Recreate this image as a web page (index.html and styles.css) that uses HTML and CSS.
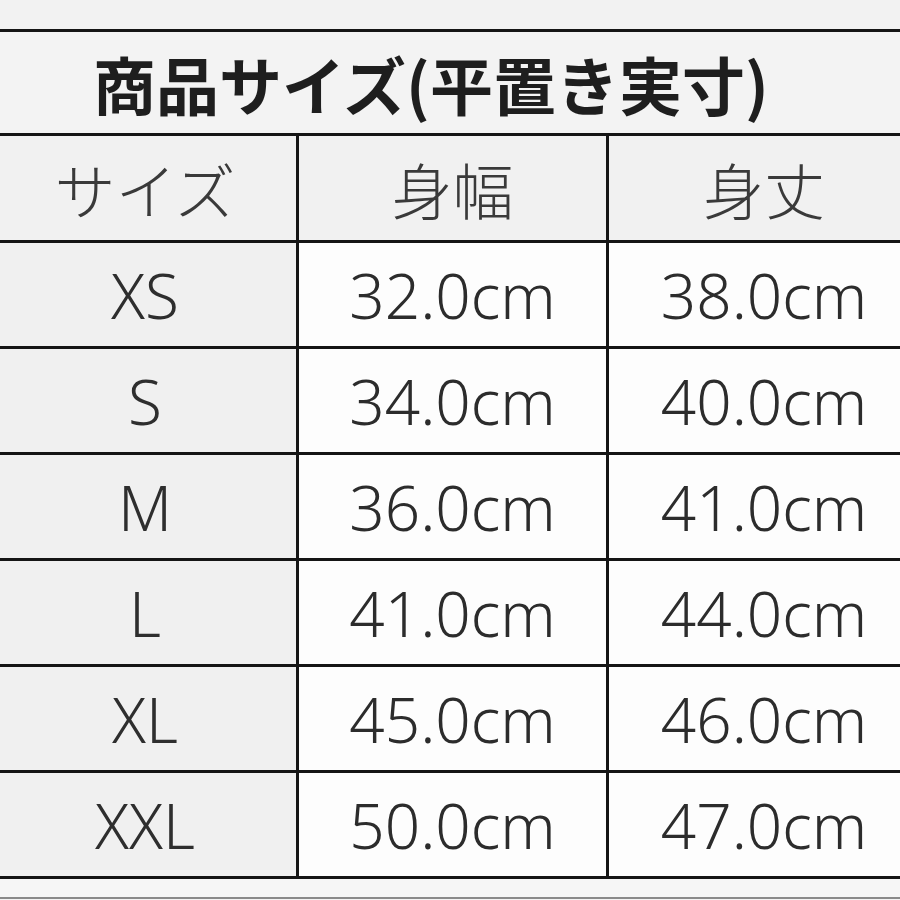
FILE: index.html
```html
<!DOCTYPE html>
<html lang="ja">
<head>
<meta charset="utf-8">
<title>商品サイズ</title>
<link rel="stylesheet" href="styles.css">
</head>
<body>
<div class="page">
  <div class="top-space"></div>
  <div class="size-table">
    <div class="cell title">商品サイズ(平置き実寸)</div>
    <div class="cell head">サイズ</div>
    <div class="cell head">身幅</div>
    <div class="cell head">身丈</div>

    <div class="cell label">XS</div>
    <div class="cell value">32.0cm</div>
    <div class="cell value">38.0cm</div>

    <div class="cell label">S</div>
    <div class="cell value">34.0cm</div>
    <div class="cell value">40.0cm</div>

    <div class="cell label">M</div>
    <div class="cell value">36.0cm</div>
    <div class="cell value">41.0cm</div>

    <div class="cell label">L</div>
    <div class="cell value">41.0cm</div>
    <div class="cell value">44.0cm</div>

    <div class="cell label">XL</div>
    <div class="cell value">45.0cm</div>
    <div class="cell value">46.0cm</div>

    <div class="cell label">XXL</div>
    <div class="cell value">50.0cm</div>
    <div class="cell value">47.0cm</div>
  </div>
  <div class="bottom-strip"></div>
</div>
</body>
</html>
```
FILE: styles.css
```css
html, body {
  margin: 0;
  padding: 0;
  overflow: hidden;
  background: #f3f3f3;
}

.page {
  width: 900px;
  height: 900px;
  overflow: hidden;
  background: #f3f3f3;
}

.top-space {
  height: 29px;
  background: #f2f2f2;
}

.size-table {
  display: grid;
  grid-template-columns: 302px 307px 310px;
  grid-template-rows: 101px 104px repeat(6, 103px);
  gap: 3px;
  padding: 3px 0;
  margin-left: -6px;
  width: 925px;
  background: #151515;
}

.cell {
  display: flex;
  align-items: center;
  justify-content: center;
  font-family: "Noto Sans", "Noto Sans CJK JP", sans-serif;
  color: #3a3a3a;
}

.title {
  grid-column: 1 / 4;
  justify-content: flex-start;
  padding-left: 99px;
  background: #f3f3f3;
  font-family: "Noto Sans CJK JP", sans-serif;
  font-weight: 700;
  font-size: 63px;
  color: #1e1e1e;
}

.head {
  background: #f1f1f1;
  font-family: "Noto Sans CJK JP", sans-serif;
  font-weight: 300;
  font-size: 61px;
  color: #3a3a3a;
}

.label {
  background: #f0f0f0;
  font-size: 62px;
  font-weight: 300;
  color: #2e2e2e;
}

.value {
  background: #fdfdfd;
  font-size: 62px;
  font-weight: 300;
  color: #2c2c2c;
}

.bottom-strip {
  height: 18px;
  background: #f6f6f6;
  border-bottom: 2px solid #8a8a8a;
}
```
